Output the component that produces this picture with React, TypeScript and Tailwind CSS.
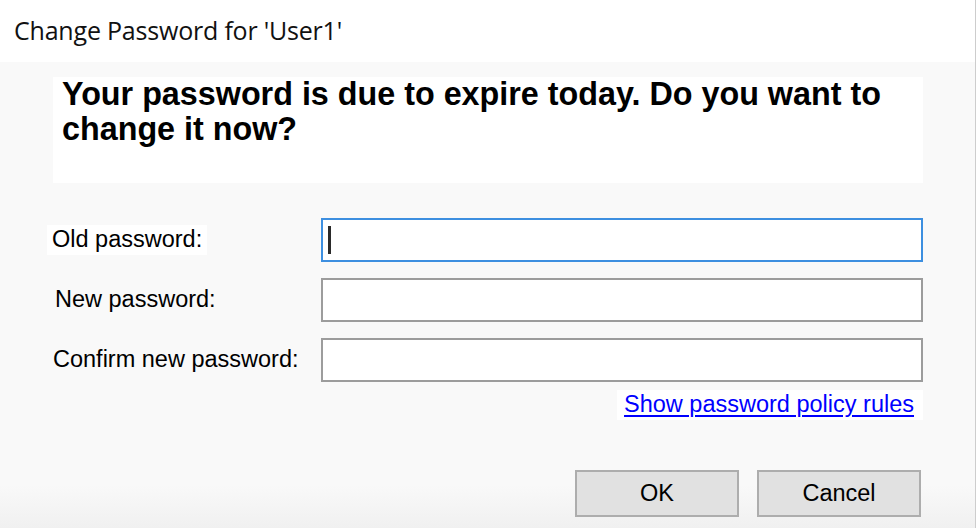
import React from "react";

export default function App() {
  const labelCls =
    "text-[23.5px] leading-none text-black [font-family:'Liberation_Sans',Arial,sans-serif]";
  return (
    <div className="w-[976px] h-[528px] flex flex-col border-r border-[#cdcdcd] [font-family:'Liberation_Sans',Arial,sans-serif]">
      <div className="h-[62px] shrink-0 bg-white flex items-center pl-[14px]">
        <span className="text-[25px] text-[#111] [font-family:'Open_Sans','Noto_Sans',sans-serif] tracking-[-0.2px]">
          Change Password for 'User1'
        </span>
      </div>
      <div className="flex-1 flex flex-col pl-[53px] pr-[52px] bg-[linear-gradient(to_bottom,#f9f9f9_0px,#f9f9f9_423px,#f0f0f0_100%)]">
        <div className="mt-[15px] h-[106px] bg-white pl-[9px] pr-[20px]">
          <p className="text-[32.3px] leading-[35px] font-bold text-black">
            Your password is due to expire today. Do you want to change it now?
          </p>
        </div>

        <div className="mt-[35px] flex flex-col gap-[16px]">
          <div className="flex items-center h-[44px]">
            <div className="w-[268px] flex">
              <span className={`${labelCls} bg-white -ml-[6px] px-[5px] py-[3px]`}>Old password:</span>
            </div>
            <div className="flex-1 h-full border-2 border-[#3d8fe0] bg-white flex items-center pl-[5px]">
              <div className="w-[3px] h-[28px] bg-[#2a2a2a]" />
            </div>
          </div>
          <div className="flex items-center h-[44px]">
            <div className="w-[268px] flex">
              <span className={`${labelCls} pl-[2px]`}>New password:</span>
            </div>
            <div className="flex-1 h-full border-2 border-[#9c9c9c] bg-white" />
          </div>
          <div className="flex items-center h-[44px]">
            <div className="w-[268px] flex">
              <span className={labelCls}>Confirm new password:</span>
            </div>
            <div className="flex-1 h-full border-2 border-[#9c9c9c] bg-white" />
          </div>
        </div>

        <div className="mt-[8px] flex justify-end">
          <a
            href="#"
            className="bg-white h-[30px] pl-[7px] pr-[9px] flex items-center text-[23.5px] leading-none text-[#0000ff] underline underline-offset-[3px]"
          >
            Show password policy rules
          </a>
        </div>

        <div className="mt-[50px] flex justify-end gap-[18px] pr-[2px]">
          <button className="w-[164px] h-[47px] border-2 border-[#adadad] bg-[#e1e1e1] text-[23.5px] text-black leading-none">
            OK
          </button>
          <button className="w-[164px] h-[47px] border-2 border-[#adadad] bg-[#e1e1e1] text-[23.5px] text-black leading-none">
            Cancel
          </button>
        </div>
      </div>
    </div>
  );
}
